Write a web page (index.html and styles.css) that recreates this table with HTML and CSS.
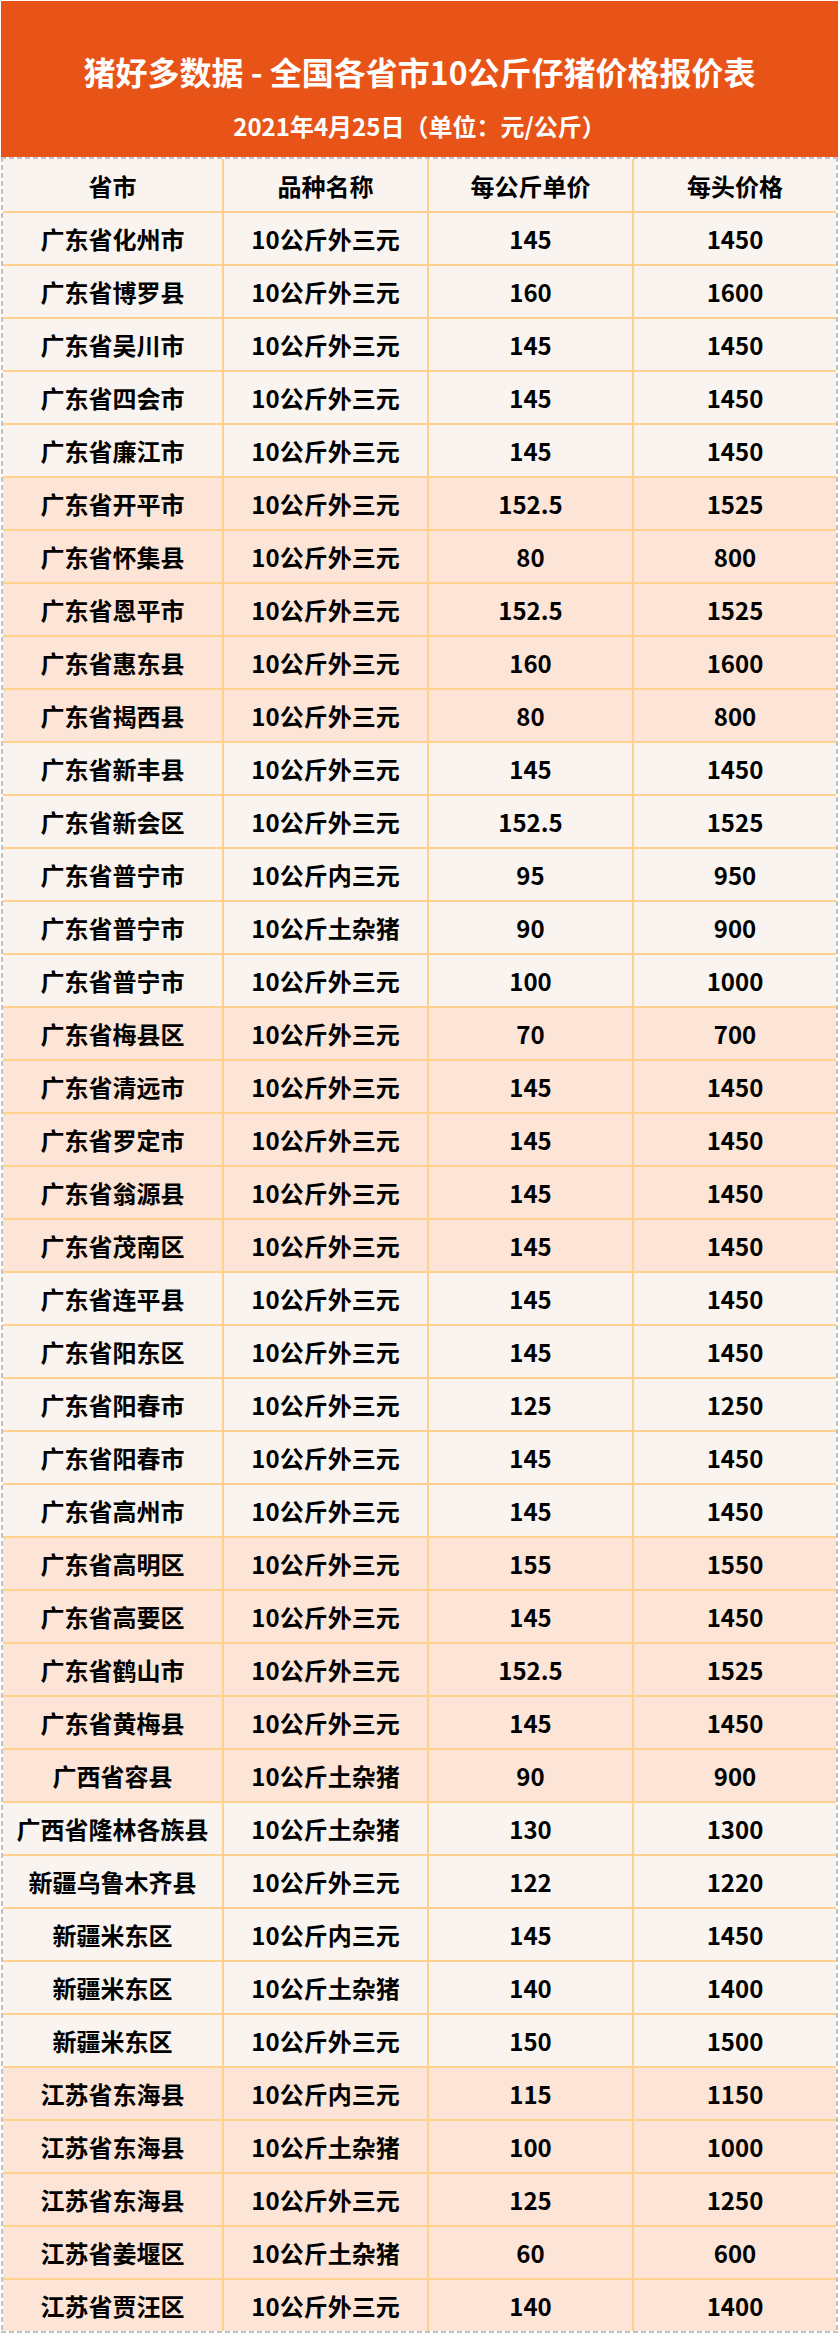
FILE: index.html
```html
<!DOCTYPE html>
<html lang="zh-CN">
<head>
<meta charset="utf-8">
<title>猪好多数据 - 全国各省市10公斤仔猪价格报价表</title>
<link rel="stylesheet" href="styles.css">
</head>
<body>
<div class="page">
  <header class="banner">
    <h1 class="title">猪好多数据 - 全国各省市10公斤仔猪价格报价表</h1>
    <p class="subtitle">2021年4月25日（单位：元/公斤）</p>
  </header>
  <div class="table">
    <div class="row head"><div class="cell">省市</div><div class="cell">品种名称</div><div class="cell">每公斤单价</div><div class="cell">每头价格</div></div>
    <div class="group light">
      <div class="row"><div class="cell">广东省化州市</div><div class="cell">10公斤外三元</div><div class="cell">145</div><div class="cell">1450</div></div>
      <div class="row"><div class="cell">广东省博罗县</div><div class="cell">10公斤外三元</div><div class="cell">160</div><div class="cell">1600</div></div>
      <div class="row"><div class="cell">广东省吴川市</div><div class="cell">10公斤外三元</div><div class="cell">145</div><div class="cell">1450</div></div>
      <div class="row"><div class="cell">广东省四会市</div><div class="cell">10公斤外三元</div><div class="cell">145</div><div class="cell">1450</div></div>
      <div class="row"><div class="cell">广东省廉江市</div><div class="cell">10公斤外三元</div><div class="cell">145</div><div class="cell">1450</div></div>
    </div>
    <div class="group peach">
      <div class="row"><div class="cell">广东省开平市</div><div class="cell">10公斤外三元</div><div class="cell">152.5</div><div class="cell">1525</div></div>
      <div class="row"><div class="cell">广东省怀集县</div><div class="cell">10公斤外三元</div><div class="cell">80</div><div class="cell">800</div></div>
      <div class="row"><div class="cell">广东省恩平市</div><div class="cell">10公斤外三元</div><div class="cell">152.5</div><div class="cell">1525</div></div>
      <div class="row"><div class="cell">广东省惠东县</div><div class="cell">10公斤外三元</div><div class="cell">160</div><div class="cell">1600</div></div>
      <div class="row"><div class="cell">广东省揭西县</div><div class="cell">10公斤外三元</div><div class="cell">80</div><div class="cell">800</div></div>
    </div>
    <div class="group light">
      <div class="row"><div class="cell">广东省新丰县</div><div class="cell">10公斤外三元</div><div class="cell">145</div><div class="cell">1450</div></div>
      <div class="row"><div class="cell">广东省新会区</div><div class="cell">10公斤外三元</div><div class="cell">152.5</div><div class="cell">1525</div></div>
      <div class="row"><div class="cell">广东省普宁市</div><div class="cell">10公斤内三元</div><div class="cell">95</div><div class="cell">950</div></div>
      <div class="row"><div class="cell">广东省普宁市</div><div class="cell">10公斤土杂猪</div><div class="cell">90</div><div class="cell">900</div></div>
      <div class="row"><div class="cell">广东省普宁市</div><div class="cell">10公斤外三元</div><div class="cell">100</div><div class="cell">1000</div></div>
    </div>
    <div class="group peach">
      <div class="row"><div class="cell">广东省梅县区</div><div class="cell">10公斤外三元</div><div class="cell">70</div><div class="cell">700</div></div>
      <div class="row"><div class="cell">广东省清远市</div><div class="cell">10公斤外三元</div><div class="cell">145</div><div class="cell">1450</div></div>
      <div class="row"><div class="cell">广东省罗定市</div><div class="cell">10公斤外三元</div><div class="cell">145</div><div class="cell">1450</div></div>
      <div class="row"><div class="cell">广东省翁源县</div><div class="cell">10公斤外三元</div><div class="cell">145</div><div class="cell">1450</div></div>
      <div class="row"><div class="cell">广东省茂南区</div><div class="cell">10公斤外三元</div><div class="cell">145</div><div class="cell">1450</div></div>
    </div>
    <div class="group light">
      <div class="row"><div class="cell">广东省连平县</div><div class="cell">10公斤外三元</div><div class="cell">145</div><div class="cell">1450</div></div>
      <div class="row"><div class="cell">广东省阳东区</div><div class="cell">10公斤外三元</div><div class="cell">145</div><div class="cell">1450</div></div>
      <div class="row"><div class="cell">广东省阳春市</div><div class="cell">10公斤外三元</div><div class="cell">125</div><div class="cell">1250</div></div>
      <div class="row"><div class="cell">广东省阳春市</div><div class="cell">10公斤外三元</div><div class="cell">145</div><div class="cell">1450</div></div>
      <div class="row"><div class="cell">广东省高州市</div><div class="cell">10公斤外三元</div><div class="cell">145</div><div class="cell">1450</div></div>
    </div>
    <div class="group peach">
      <div class="row"><div class="cell">广东省高明区</div><div class="cell">10公斤外三元</div><div class="cell">155</div><div class="cell">1550</div></div>
      <div class="row"><div class="cell">广东省高要区</div><div class="cell">10公斤外三元</div><div class="cell">145</div><div class="cell">1450</div></div>
      <div class="row"><div class="cell">广东省鹤山市</div><div class="cell">10公斤外三元</div><div class="cell">152.5</div><div class="cell">1525</div></div>
      <div class="row"><div class="cell">广东省黄梅县</div><div class="cell">10公斤外三元</div><div class="cell">145</div><div class="cell">1450</div></div>
      <div class="row"><div class="cell">广西省容县</div><div class="cell">10公斤土杂猪</div><div class="cell">90</div><div class="cell">900</div></div>
    </div>
    <div class="group light">
      <div class="row"><div class="cell">广西省隆林各族县</div><div class="cell">10公斤土杂猪</div><div class="cell">130</div><div class="cell">1300</div></div>
      <div class="row"><div class="cell">新疆乌鲁木齐县</div><div class="cell">10公斤外三元</div><div class="cell">122</div><div class="cell">1220</div></div>
      <div class="row"><div class="cell">新疆米东区</div><div class="cell">10公斤内三元</div><div class="cell">145</div><div class="cell">1450</div></div>
      <div class="row"><div class="cell">新疆米东区</div><div class="cell">10公斤土杂猪</div><div class="cell">140</div><div class="cell">1400</div></div>
      <div class="row"><div class="cell">新疆米东区</div><div class="cell">10公斤外三元</div><div class="cell">150</div><div class="cell">1500</div></div>
    </div>
    <div class="group peach">
      <div class="row"><div class="cell">江苏省东海县</div><div class="cell">10公斤内三元</div><div class="cell">115</div><div class="cell">1150</div></div>
      <div class="row"><div class="cell">江苏省东海县</div><div class="cell">10公斤土杂猪</div><div class="cell">100</div><div class="cell">1000</div></div>
      <div class="row"><div class="cell">江苏省东海县</div><div class="cell">10公斤外三元</div><div class="cell">125</div><div class="cell">1250</div></div>
      <div class="row"><div class="cell">江苏省姜堰区</div><div class="cell">10公斤土杂猪</div><div class="cell">60</div><div class="cell">600</div></div>
      <div class="row"><div class="cell">江苏省贾汪区</div><div class="cell">10公斤外三元</div><div class="cell">140</div><div class="cell">1400</div></div>
    </div>
  </div>
</div>
</body>
</html>
```

FILE: styles.css
```css
* {
  box-sizing: border-box;
}

html, body {
  margin: 0;
  padding: 0;
  background: #ffffff;
}

body {
  font-family: "Noto Sans CJK SC", "Noto Sans", sans-serif;
  color: #000000;
}

.page {
  width: 837px;
  margin: 1px 0 0 1px;
}

.banner {
  height: 156px;
  background: #e85418;
  color: #ffffff;
  display: flex;
  flex-direction: column;
  align-items: center;
  padding-top: 50px;
}

.title {
  margin: 0;
  font-size: 32px;
  line-height: 40px;
  font-weight: 700;
}

.subtitle {
  margin: 20px 0 0;
  font-size: 24px;
  line-height: 30px;
  font-weight: 700;
}

.table {
  padding: 2px;
  background-color: #ffffff;
  background-image:
    repeating-linear-gradient(90deg, #c2c2c2 0 5px, transparent 5px 8px),
    repeating-linear-gradient(90deg, #c2c2c2 0 5px, transparent 5px 8px),
    repeating-linear-gradient(180deg, #c2c2c2 0 5px, transparent 5px 8px),
    repeating-linear-gradient(180deg, #c2c2c2 0 5px, transparent 5px 8px);
  background-size: 100% 2px, 100% 2px, 2px 100%, 2px 100%;
  background-position: top left, bottom left, top left, top right;
  background-repeat: no-repeat;
}

.row {
  display: grid;
  grid-template-columns: 219px 203px 203px 202px;
  column-gap: 2px;
  background: #ffd18d;
  height: 53px;
  border-top: 2px solid #ffd18d;
}

.row.head {
  height: 52px;
  border-top: 0;
}

.cell {
  display: flex;
  align-items: center;
  justify-content: center;
  font-size: 24px;
  font-weight: 700;
  white-space: nowrap;
  background: #f9f4f0;
}

.peach .cell {
  background: #fce4d6;
}
```
